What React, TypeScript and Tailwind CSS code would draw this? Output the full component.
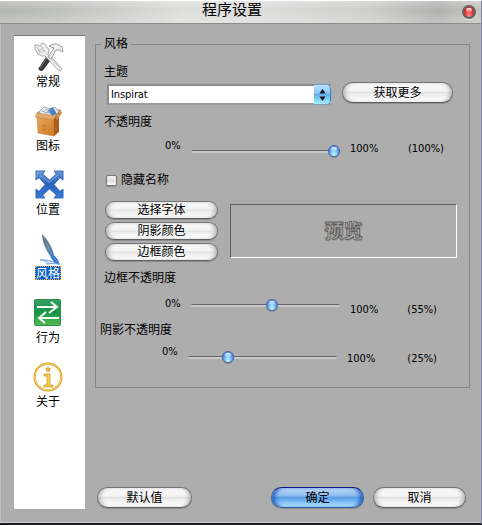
import type { ReactNode } from "react";

const glossy =
  "shrink-0 rounded-full border border-[#747474] border-b-[#5f5f5f] bg-[linear-gradient(180deg,#fafafa_0%,#f4f4f4_42%,#e2e2e2_50%,#efefef_62%,#ffffff_100%)] shadow-[0_1px_1px_#8b8b8b,inset_4px_0_4px_-2px_#b4b4b4,inset_-4px_0_4px_-2px_#b4b4b4] flex items-center justify-center whitespace-nowrap";
const primary =
  "shrink-0 rounded-full border border-[#35639f] border-t-[#101b86] bg-[linear-gradient(180deg,#c3dcf7_0%,#8dbbee_40%,#5b9ee6_50%,#76b5f2_68%,#b4ebff_100%)] shadow-[0_1px_1px_#8b8b8b,inset_5px_0_4px_-2px_#2763c7,inset_-5px_0_4px_-2px_#2763c7] flex items-center justify-center whitespace-nowrap";

function Button({ className, blue, children }: { className: string; blue?: boolean; children: ReactNode }) {
  return <button className={`${blue ? primary : glossy} ${className}`}>{children}</button>;
}

function Slider({ value, amount, className, startClass, trackClass, endClass }: {
  value: number; amount: number; className: string; startClass: string; trackClass: string; endClass: string;
}) {
  // The knob travels over the groove, so it is the one overlaid part.
  return (
    <div className={`flex h-6 items-start ${className}`}>
      <span className={`w-[26px] ${startClass}`}>0%</span>
      <div className={`relative h-3 w-[149px] ${trackClass}`}>
        <div className="mt-[5px] h-[3px] rounded-full border-t border-[#656565] bg-[#c9c9c9]" />
        <div
          className="absolute top-0 h-3 w-3 -translate-x-1/2 rounded-full border border-[#4562a6] bg-[radial-gradient(ellipse_at_50%_95%,#c6ffff_0%,#86ccfd_40%,#5c9bf0_65%,#5a7fd8_100%)] shadow-[0_1px_1px_#858585]"
          style={{ left: value }}
        >
          <div className="mx-auto mt-px h-[4px] w-[6px] rounded-full bg-linear-to-b from-white/80 to-white/20" />
        </div>
      </div>
      <span className={`ml-[10px] ${endClass}`}>100%</span>
      <span className={`ml-auto ${endClass}`}>({amount}%)</span>
    </div>
  );
}

function Tools() {
  return (
    <svg width="32" height="32" viewBox="0 0 32 32">
      <path d="m15 15 4 3-8 11q-2 2-4.500-1z" fill="#383838" stroke="#1c1c1c" strokeWidth=".6" />
      <path d="m15 17-7 10" stroke="#8c8c8c" strokeWidth=".8" />
      <path d="M3 4v4l3 5 4 2 3 0 13 14q3 2 4-1L16 12l1-3-4-6-3-1-2 3-2-1z" fill="#efefef" stroke="#8b8b8b" strokeWidth=".7" />
      <path d="m5 6 3 5m1-6 4 6m-7-1 5-3m-4 5 6-3m1 3 14 15" stroke="#aaa" strokeWidth=".7" />
      <path d="m16 16 6-9-5-2q4-3 8-2l5 3 1 5-4-2-3 0-5 9z" fill="#ededed" stroke="#777" strokeWidth=".7" />
      <path d="m20 5 7 1" stroke="#fff" strokeWidth="1.200" />
    </svg>
  );
}

function Box() {
  return (
    <svg className="ml-[2px]" width="30" height="34" viewBox="0 0 30 34">
      <defs>
        <linearGradient id="boxFront" x1="0" y1="0" x2="1" y2="1"><stop stopColor="#e9a65d" /><stop offset="1" stopColor="#cc7822" /></linearGradient>
      </defs>
      <path d="m3 9 6-4 18 1-4 7z" fill="#b8c3cb" stroke="#b87b3d" strokeWidth=".7" />
      <path d="m5 8 5-5 7 2 4-2 4 5-5 5-12-2z" fill="#e4ecf2" stroke="#8495a5" strokeWidth=".7" />
      <path d="m14 6 5-3 4 7-5 2z" fill="#4d80c2" />
      <path d="m8 7 5 2 4-3m-5-1 4 5" stroke="#7892a9" strokeWidth=".8" fill="none" />
      <path d="m3 13 17 0v19L4 29z" fill="url(#boxFront)" stroke="#b97330" strokeWidth=".5" />
      <path d="m20 13 5-3v18l-5 4z" fill="#ad5d17" />
      <path d="m3 9-2 4 18 3 3-4z" fill="#e2aa70" stroke="#c08040" strokeWidth=".5" />
      <path d="m21 12 5-6 2 3-5 7z" fill="#cb883f" />
      <path d="m8 21 4 1m-2 0v5m-2-2 4 1" stroke="#c07c35" />
    </svg>
  );
}

function Arrows() {
  return (
    <svg className="ml-[2px]" width="29" height="29" viewBox="0 0 32 32">
      <defs><linearGradient id="arrowBlue" x2="0" y2="1"><stop stopColor="#6797d3" /><stop offset=".5" stopColor="#2860bd" /><stop offset="1" stopColor="#3b7ddb" /></linearGradient></defs>
      <path d="M1 1h10L8.500 4.500 16 11l7.500-6.500L21 1h10v10l-3.500-2.500L21 16l6.500 7.500L31 21v10H21l2.500-3.500L16 21l-7.500 6.500L11 31H1V21l3.500 2.500L11 16 4.500 8.500 1 11z" fill="url(#arrowBlue)" stroke="#275bab" strokeWidth=".8" />
      <path d="M3 2.500h5M5.500 6l10 7.500 10-8M2.500 3v5" stroke="#8eb8e9" fill="none" strokeWidth=".8" />
    </svg>
  );
}

function Pen() {
  return (
    <svg width="32" height="34" viewBox="0 0 32 34">
      <defs><linearGradient id="penBlue" x1="0" y1="0" x2="1" y2="1"><stop stopColor="#42545f" /><stop offset=".55" stopColor="#64899f" /><stop offset="1" stopColor="#236fd3" /></linearGradient></defs>
      <path d="M8 28q8-1 19 4-7-1-12 0 1-3-7-4" stroke="#7ca4e6" fill="#c8dcf9" />
      <path d="M10 2q9 9 12 21l-3 2Q11 15 10 2" fill="url(#penBlue)" />
      <path d="m11 4 9 19" stroke="#92a8af" strokeWidth=".7" />
      <path d="m18.500 25 3.500-2 4 5 2 5-6-3z" fill="#2e73d3" />
      <path d="m21 25 6 7" stroke="#78aae9" strokeWidth=".8" />
    </svg>
  );
}

function Behavior() {
  return (
    <svg width="28" height="28" viewBox="0 0 28 28">
      <defs><linearGradient id="greenTile" x2="0" y2="1"><stop stopColor="#35a062" /><stop offset=".5" stopColor="#169347" /><stop offset="1" stopColor="#55bc52" /></linearGradient></defs>
      <rect x=".5" y=".5" width="26" height="26" rx="1" fill="url(#greenTile)" stroke="#2b8c4c" />
      <path d="M3 8h20M17 3l6 5-8 6M25 19H5m7-6-7 6 6 5" stroke="#f5fff3" strokeWidth="2" fill="none" />
    </svg>
  );
}

function Info() {
  return (
    <svg width="30" height="30" viewBox="0 0 30 30">
      <circle cx="15" cy="15" r="13.400" fill="#fffef7" stroke="#d79f32" strokeWidth="2.200" />
      <circle cx="15" cy="15" r="13.300" fill="none" stroke="#ffd652" strokeWidth=".9" />
      <circle cx="15" cy="7.500" r="2" fill="#efbc36" stroke="#b98627" strokeWidth=".6" />
      <path d="M11 12h6v11h3v2h-9v-2h3v-9h-3z" fill="#f8cf4c" stroke="#c18c28" strokeWidth=".7" />
    </svg>
  );
}

const items = [
  { label: "常规", icon: <Tools /> },
  { label: "图标", icon: <Box /> },
  { label: "位置", icon: <Arrows /> },
  { label: "风格", icon: <Pen />, active: true },
  { label: "行为", icon: <Behavior /> },
  { label: "关于", icon: <Info /> },
];

export default function App() {
  return (
    <main className="flex h-[525px] w-[482px] flex-col border-t border-r border-b-2 border-t-white border-r-[#8584a9] border-b-[#18191d] bg-[#adadad] font-['DejaVu_Sans_Condensed','DejaVu_Sans','Noto_Sans_CJK_SC',sans-serif] text-[11px] leading-4 text-black [font-stretch:condensed]">
      <header className="flex h-[23px] shrink-0 items-center border-b border-[#8c8c8c] bg-[linear-gradient(180deg,#ffffff40,#ffffff00_40%,#ffffff38),linear-gradient(90deg,#b3b5b2_0%,#bfc1be_13%,#dededc_38%,#dbdbda_56%,#cdcdcb_77%,#b0b1af_91%,#c4c4c1_100%)]">
        <h1 className="ml-[202px] self-start font-['Noto_Sans_CJK_SC',sans-serif] text-[15px] leading-[15px]">程序设置</h1>
        <button className="mr-[5px] ml-auto flex h-[14px] w-[14px] justify-center rounded-full border-2 border-[#646464] bg-[radial-gradient(ellipse_at_50%_85%,#ff8984,#df3838_55%,#b52222)] shadow-[0_1px_1px_#eee]">
          <i className="mt-px h-[4px] w-[6px] rounded-full bg-linear-to-b from-[#ffe0da] to-[#ee7770]" />
        </button>
      </header>

      <div className="flex min-h-0 flex-1 border-b border-b-[#d0d0d0] border-l border-l-[#c0c0c0] pl-[13px]">
        <nav className="mt-[11px] flex h-[474px] w-[71px] shrink-0 flex-col items-center border-t border-[#777] bg-white pt-[3px] font-['Noto_Sans_CJK_SC',sans-serif] text-[12px]">
          {items.map((item) => (
            <div key={item.label} className="flex h-16 w-full shrink-0 flex-col items-center pr-[3px]">
              <div className="flex h-[35px] items-center justify-center">{item.icon}</div>
              <span className={item.active ? "h-[14px] bg-[#0b5fc5] px-px leading-[13px] text-white outline outline-1 -outline-offset-1 outline-dotted outline-[#f0a14b]" : "h-[14px] leading-[14px]"}>{item.label}</span>
            </div>
          ))}
        </nav>

        <div className="ml-[10px] flex w-[375px] flex-col pt-[13px]">
          <fieldset className="h-[351px] w-[375px] shrink-0 border border-[#858585] text-[12px]">
            <legend className="ml-[5px] h-[14px] px-[3px] leading-[14px]">风格</legend>
            <div className="mt-[13px] pl-[8px]">主题</div>
            <div className="mt-[2px] flex h-6 pl-[11px]">
              <div className="mt-[2px] flex h-[21px] w-[224px] shrink-0 border-2 border-r-0 border-[#8c8c8c] border-b-[#9c9c9c] bg-white pl-[2px] text-[11px] leading-[18px]">
                <span className="tracking-[-0.1px]">Inspirat</span>
                <span className="-my-[2px] ml-auto flex w-[17px] items-center justify-center rounded-r-[5px] border border-l-0 border-[#6fa0c8] border-r-[#417cae] bg-[linear-gradient(180deg,#bfe3fa_0%,#82c3f6_45%,#5caff1_50%,#a8f1ff_100%)]">
                  <svg width="7" height="12" viewBox="0 0 7 12"><path d="M3.500 0 6.500 4.500h-6zM.5 7.500h6l-3 4.500z" fill="#101010" /></svg>
                </span>
              </div>
              <Button className="ml-[11px] h-[21px] w-[111px] leading-5">获取更多</Button>
            </div>
            <div className="mt-[8px] pl-[8px]">不透明度</div>
            <Slider value={143} amount={100} className="mt-[7px] w-[348px] pl-[69px] text-[11px]" startClass="mt-px" trackClass="mt-2" endClass="mt-[4px]" />
            <label className="mt-[11px] flex h-4 items-center pl-[10px]">
              <span className="mr-[4px] h-[11px] w-[11px] rounded-[2px] border border-[#777] bg-[linear-gradient(#f5f5f5,#ddd_50%,#fff)] shadow-[0_1px_1px_#888]" />
              隐藏名称
            </label>
            <div className="mt-[13px] flex pl-[9px]">
              <div className="flex w-[113px] flex-col gap-[3px]">
                <Button className="h-[18px] w-[113px]">选择字体</Button>
                <Button className="h-[18px] w-[113px]">阴影颜色</Button>
                <Button className="h-[18px] w-[113px]">边框颜色</Button>
              </div>
              <div className="mt-[3px] ml-[12px] flex h-[54px] w-[227px] items-center justify-center border border-t-[#5f5f5f] border-r-white border-b-white border-l-[#5f5f5f] pb-[2px]">
                <span className="font-['Noto_Sans_CJK_SC',sans-serif] text-[19px] font-bold text-[#b1b1b1] [-webkit-text-stroke:0.8px_#5b5b5b] [text-shadow:1px_1px_1px_#8c8c8c]">预览</span>
              </div>
            </div>
            <div className="mt-[9px] pl-[8px]">边框不透明度</div>
            <Slider value={81} amount={55} className="mt-[9px] w-[341px] pl-[69px] text-[11px]" startClass="mt-px" trackClass="mt-[4px]" endClass="mt-[7px]" />
            <div className="mt-[3px] pl-[4px]">阴影不透明度</div>
            <Slider value={40} amount={25} className="mt-[5px] w-[341px] pl-[66px] text-[11px]" startClass="mt-px" trackClass="mt-2" endClass="mt-[8px]" />
          </fieldset>
          <div className="mt-[99px] flex pl-[2px] text-[12px]">
            <Button className="h-[21px] w-[95px]">默认值</Button>
            <Button blue className="ml-[79px] h-[21px] w-[93px]">确定</Button>
            <Button className="ml-[9px] h-[21px] w-[93px]">取消</Button>
          </div>
        </div>
      </div>
    </main>
  );
}
